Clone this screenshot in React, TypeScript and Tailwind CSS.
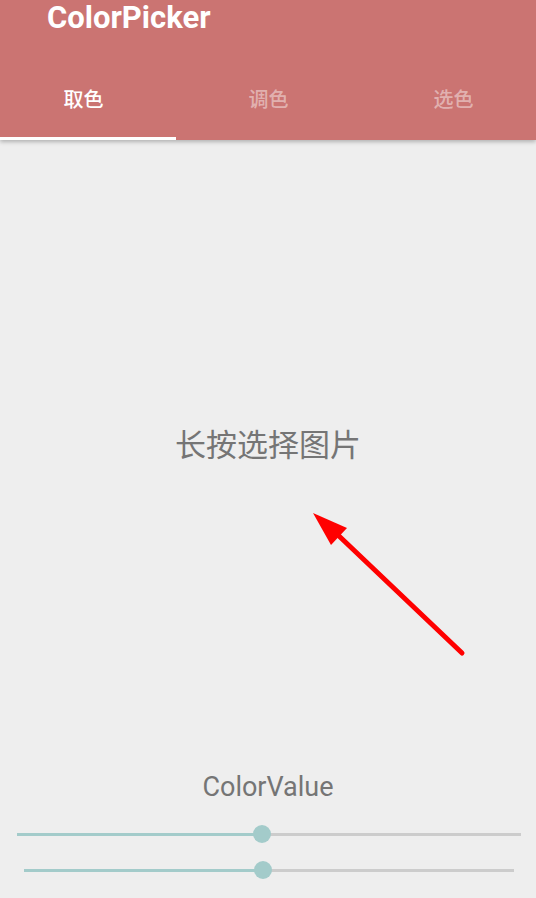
import { useState } from 'react';

const tabs = ['取色', '调色', '选色'];

const Slider = ({ left, right, value }: { left: number; right: number; value: number }) => {
  return (
    <div className="relative h-[18px]" style={{ marginLeft: left, marginRight: right }}>
      <div className="absolute left-0 right-0 top-[8px] h-[3px] bg-[#cccccc]" />
      <div className="absolute left-0 top-[8px] h-[3px] bg-[#a3cbca]" style={{ width: `${value}%` }} />
      <div
        className="absolute top-0 h-[18px] w-[18px] -translate-x-1/2 rounded-full bg-[#a3cbca]"
        style={{ left: `${value}%` }}
      />
    </div>
  );
};

export default function App() {
  const [active, setActive] = useState(0);

  return (
    <div className="flex min-h-[898px] flex-col bg-[#eeeeee] font-['Roboto','Noto_Sans_CJK_SC',sans-serif]">
      <header className="relative z-10 bg-[#cb7472] shadow-[0_2px_4px_rgba(0,0,0,0.25)]">
        <div className="h-[72px] pl-[47px] pt-[2px]">
          <h1 className="text-[31px] font-bold leading-[32px] text-white">ColorPicker</h1>
        </div>
        <div className="relative h-[68px] overflow-hidden">
          <div className="-ml-[9px] grid h-full grid-cols-[185px_185px_185px]">
            {tabs.map((tab, i) => (
              <button
                key={tab}
                onClick={() => setActive(i)}
                className={
                  'flex items-center justify-center pb-[12px] text-[20px] font-medium ' +
                  (active === i ? 'text-white' : 'text-white/45')
                }
              >
                {tab}
              </button>
            ))}
          </div>
          <span className="absolute bottom-0 h-[3px] w-[176px] bg-white" style={{ left: active * 179 }} />
        </div>
      </header>

      <main className="flex flex-1 flex-col">
        <p className="mt-[290px] text-center text-[31px] leading-[32px] text-[#757575]">长按选择图片</p>

        <svg className="ml-[305px] mt-[41px]" width="165" height="160" viewBox="0 0 165 160">
          <line x1="34" y1="33" x2="157" y2="150" stroke="#ff0000" strokeWidth="5" strokeLinecap="round" />
          <polygon points="8,10 42,25 26,42" fill="#ff0000" />
        </svg>

        <p className="mt-[109px] text-center text-[27px] leading-[30px] text-[#757575]">ColorValue</p>

        <div className="mt-[23px] flex flex-col gap-[18px]">
          <Slider left={17} right={15} value={48.7} />
          <Slider left={24} right={22} value={48.7} />
        </div>
      </main>
    </div>
  );
}
